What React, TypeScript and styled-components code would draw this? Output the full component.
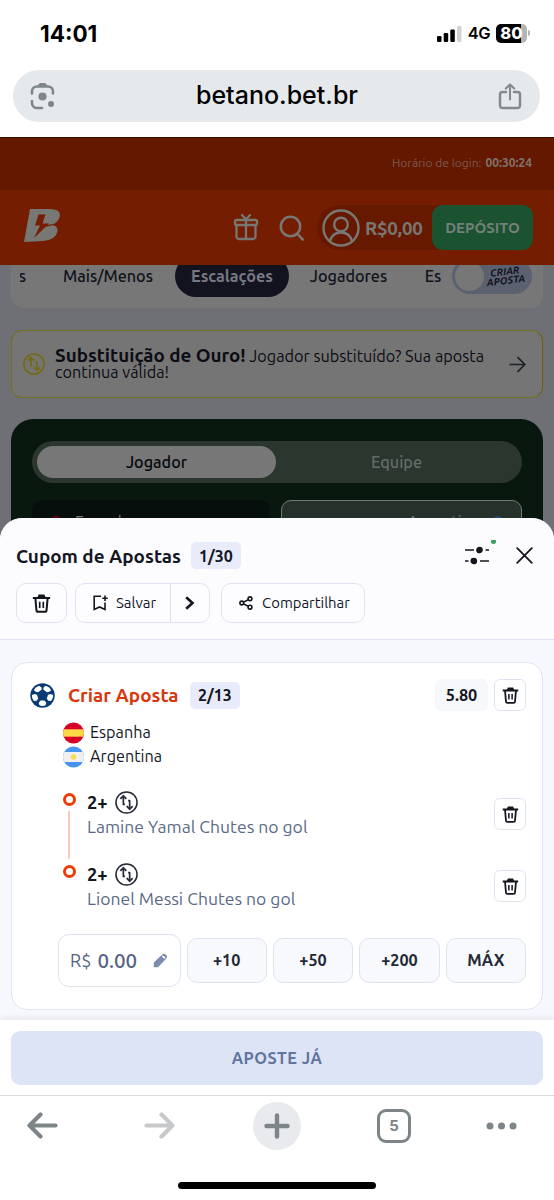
import React from "react";
import styled, { createGlobalStyle, css } from "styled-components";

const GlobalStyle = createGlobalStyle`
  * { box-sizing: border-box; }
  body { margin: 0; background: #fff; }
`;

const ui = `"Ubuntu", "Noto Sans", "Open Sans", sans-serif`;
const system = `"Inter", "Liberation Sans", sans-serif`;

const Screen = styled.div`
  width: 554px;
  height: 1200px;
  overflow: hidden;
  display: flex;
  flex-direction: column;
  background: #fff;
  font-family: ${ui};
  color: #14171f;
`;

const Text = styled.span<{ $size: number; $weight?: number; $color?: string; $track?: number }>`
  font-size: ${(p) => p.$size}px;
  font-weight: ${(p) => p.$weight ?? 400};
  color: ${(p) => p.$color ?? "inherit"};
  letter-spacing: ${(p) => p.$track ?? 0}px;
  white-space: nowrap;
`;

/* ---------- phone chrome ---------- */

const StatusBar = styled.div`
  height: 70px;
  padding: 4px 24px 8px 40px;
  display: flex;
  align-items: center;
  justify-content: space-between;
  font-family: ${system};
  color: #000;
  flex: none;
`;
const StatusIcons = styled.div`
  display: flex;
  align-items: center;
  gap: 6px;
`;
const Battery = styled.div`
  width: 31px;
  height: 19px;
  border-radius: 5px;
  background: linear-gradient(90deg, #000 25px, #b4b4b4 25px);
  color: #fff;
  display: flex;
  align-items: center;
  justify-content: center;
`;
const BatteryTip = styled.div`
  width: 2px;
  height: 6px;
  margin-left: -5px;
  border-radius: 0 2px 2px 0;
  background: #b4b4b4;
`;
const AddressBar = styled.div`
  flex: none;
  height: 52px;
  margin: 0 14px 15px 13px;
  padding: 0 18px 0 17px;
  border-radius: 26px;
  background: #e6e9ec;
  display: flex;
  align-items: center;
  justify-content: space-between;
  font-family: ${system};
  color: #000;
`;
const Address = styled.div`
  padding-bottom: 3px;
`;
const Toolbar = styled.div`
  flex: none;
  height: 60px;
  border-top: 1px solid #dcdddf;
  padding: 0 37px 0 27px;
  display: flex;
  align-items: center;
`;
const NewTab = styled.div`
  width: 48px;
  height: 48px;
  margin-left: 78px;
  border-radius: 50%;
  background: #e9eaee;
  display: flex;
  align-items: center;
  justify-content: center;
`;
const TabCount = styled.div`
  width: 34px;
  height: 34px;
  margin: 0 auto 0 76px;
  border: 3.5px solid #7d8588;
  border-radius: 9px;
  display: flex;
  align-items: center;
  justify-content: center;
  font-family: ${system};
`;
const ForwardSlot = styled.div`
  display: flex;
  margin-left: 86px;
`;
const HomeIndicator = styled.div`
  width: 198px;
  height: 7px;
  margin: 27px auto 0 178px;
  border-radius: 4px;
  background: #000;
`;

/* ---------- dimmed page ---------- */

const Page = styled.div`
  flex: none;
  height: 403px;
  overflow: hidden;
  background: #6f7075;
`;
const LoginStrip = styled.div`
  height: 53px;
  padding: 0 22px 3px;
  border-top: 1px solid #3c0f00;
  background: #641800;
  display: flex;
  align-items: center;
  justify-content: flex-end;
  gap: 4px;
`;
const SiteHeader = styled.div`
  height: 75px;
  padding: 0 21px 0 23px;
  background: #751d00;
  display: flex;
  align-items: center;
`;
const LogoSlot = styled.div`
  display: flex;
  padding-bottom: 5px;
`;
const HeaderActions = styled.div`
  margin-left: auto;
  display: flex;
  align-items: center;
  gap: 20px;
`;
const AccountPill = styled.div`
  width: 216px;
  height: 45px;
  margin-left: -8px;
  padding-left: 5px;
  border-radius: 23px 12px 12px 23px;
  background: #671900;
  display: flex;
  align-items: center;
`;
const Balance = styled.div`
  width: 72px;
  padding-left: 5px;
`;
const Deposit = styled.div`
  width: 101px;
  height: 45px;
  border-radius: 11px;
  background: #1b5230;
  display: flex;
  align-items: center;
  justify-content: center;
`;
const TabsCard = styled.div`
  height: 43px;
  margin: 0 11px;
  padding-left: 9px;
  border-radius: 0 0 13px 13px;
  background: #777778;
  overflow: hidden;
  display: flex;
  align-items: flex-start;
`;
const Tab = styled.div<{ $w: number; $active?: boolean; $indent?: number }>`
  flex: none;
  width: ${(p) => p.$w}px;
  height: 42px;
  margin-top: -10px;
  padding: 0 0 1px ${(p) => p.$indent ?? 0}px;
  display: flex;
  align-items: center;
  justify-content: center;
  ${(p) => p.$active && css`background: #12131f; border-radius: 21px;`}
`;
const ClippedTab = styled(Tab)`
  overflow: hidden;
  justify-content: flex-end;
`;
const BuildToggle = styled.div`
  flex: none;
  width: 80px;
  height: 36px;
  margin: -7px 0 0 -6px;
  padding: 0 7px 0 3px;
  border-radius: 18px;
  background: #5c6170;
  display: flex;
  align-items: center;
  justify-content: space-between;
`;
const Knob = styled.div`
  width: 29px;
  height: 29px;
  border-radius: 50%;
  background: #777778;
`;
const ToggleLabel = styled.div`
  transform: rotate(-7deg);
  text-align: center;
  font-size: 10px;
  line-height: 9px;
  font-weight: 700;
  font-style: italic;
  color: #10121c;
`;
const Promo = styled.div`
  height: 68px;
  margin: 22px 11px 0;
  padding: 0 16px 0 11px;
  border: 1.5px solid;
  border-color: #75701c #6a6200 #75701c #75701c;
  border-radius: 11px;
  background: #757576;
  display: flex;
  align-items: center;
`;
const PromoCopy = styled.div`
  flex: 1;
  padding: 0 0 1px 10px;
  line-height: 16px;
  color: #0c0d13;
`;
const Pitch = styled.div`
  height: 160px;
  margin: 21px 11px 0;
  padding: 22px 21px 0;
  border-radius: 22px;
  background: #09180f;
`;
const Segmented = styled.div`
  height: 42px;
  padding: 5px;
  border-radius: 21px;
  background: #2b362f;
  display: grid;
  grid-template-columns: 239px 1fr;
`;
const Segment = styled.div<{ $active?: boolean }>`
  border-radius: 16px;
  display: flex;
  align-items: center;
  justify-content: center;
  color: ${(p) => (p.$active ? "#06080c" : "#646c67")};
  background: ${(p) => (p.$active ? "#777778" : "transparent")};
`;
const Teams = styled.div`
  margin-top: 17px;
  display: grid;
  grid-template-columns: 238px 241px;
  gap: 11px;
`;
const Team = styled.div<{ $selected?: boolean }>`
  height: 43px;
  padding: 0 15px;
  border-radius: 10px;
  display: flex;
  align-items: center;
  gap: 11px;
  color: #777;
  background: ${(p) => (p.$selected ? "#26312b" : "#060f0c")};
  border: 1.5px solid ${(p) => (p.$selected ? "#717973" : "#060f0c")};
  justify-content: ${(p) => (p.$selected ? "flex-end" : "flex-start")};
`;
const TeamDot = styled.div<{ $c: string }>`
  width: 12px;
  height: 12px;
  margin: 0 2px;
  border-radius: 50%;
  background: ${(p) => p.$c};
`;

/* ---------- betslip sheet ---------- */

const Sheet = styled.div`
  flex: none;
  position: relative;
  height: 577px;
  margin-top: -22px;
  border-radius: 22px 22px 0 0;
  overflow: hidden;
  background: #f7f8fd;
  display: flex;
  flex-direction: column;
`;
const SheetHeader = styled.div`
  height: 122px;
  padding: 24px 16px 0;
  background: #fcfcff;
  border-bottom: 1px solid #dfe3f1;
`;
const TitleRow = styled.div`
  height: 27px;
  display: flex;
  align-items: center;
`;
const CountBadge = styled.div`
  width: 50px;
  height: 27px;
  border-radius: 5px;
  background: #e8ebf9;
  display: flex;
  align-items: center;
  justify-content: center;
`;
const SheetTitle = styled.div`
  width: 175px;
`;
const SheetControls = styled.div`
  margin-left: auto;
  display: flex;
  align-items: center;
  gap: 26px;
  padding-right: 5px;
`;
const SettingsButton = styled.div`
  position: relative;
  display: flex;
`;
const LiveDot = styled.div`
  position: absolute;
  right: -6px;
  top: -6px;
  width: 5px;
  height: 4px;
  border-radius: 1px 1px 3px 3px;
  background: #3d9f63;
`;
const ActionRow = styled.div`
  margin-top: 14px;
  display: flex;
`;
const Action = styled.div<{ $w: number; $gap?: number }>`
  width: ${(p) => p.$w}px;
  height: 40px;
  margin-left: ${(p) => p.$gap ?? 0}px;
  border: 1px solid #dfe3f1;
  border-radius: 10px;
  background: #fdfdff;
  display: flex;
  align-items: center;
  justify-content: center;
  gap: 8px;
`;
const SplitAction = styled(Action)`
  justify-content: flex-start;
  gap: 0;
`;
const SplitMain = styled.div`
  width: 95px;
  height: 100%;
  padding: 0 0 1px 3px;
  border-right: 1px solid #dfe3f1;
  display: flex;
  align-items: center;
  justify-content: center;
  gap: 8px;
`;
const ShareAction = styled(Action)`
  padding: 0 0 1px 3px;
  gap: 9px;
`;
const SplitMore = styled.div`
  flex: 1;
  display: flex;
  justify-content: center;
`;
const BetCard = styled.div`
  height: 348px;
  margin: 22px 11px 0;
  padding: 16px 16px 0 18px;
  border: 1px solid #e0e3f1;
  border-radius: 16px;
  background: #fff;
`;
const BetHeader = styled.div`
  height: 32px;
  display: flex;
  align-items: center;
`;
const BetTitle = styled.div`
  width: 122px;
  margin-left: 13px;
`;
const Odds = styled.div`
  width: 53px;
  height: 32px;
  margin: 0 6px 0 auto;
  padding-bottom: 1px;
  border-radius: 6px;
  background: #f7f8fc;
  display: flex;
  align-items: center;
  justify-content: center;
`;
const RemoveButton = styled.div`
  width: 32px;
  height: 32px;
  border: 1px solid #dfe3f1;
  border-radius: 6px;
  background: #fff;
  display: flex;
  align-items: center;
  justify-content: center;
`;
const TeamsList = styled.div`
  margin: 10px 0 0 33px;
`;
const TeamLine = styled.div`
  height: 24px;
  display: flex;
  align-items: center;
  gap: 6px;
`;
const TeamName = styled.div`
  padding-bottom: 2px;
`;
const Legs = styled.div`
  margin: 22px 0 0 32px;
`;
const Leg = styled.div`
  height: 72px;
  display: flex;
`;
const Track = styled.div`
  width: 14px;
  padding-top: 2px;
  display: flex;
  flex-direction: column;
  align-items: center;
`;
const Ring = styled.div`
  width: 13px;
  height: 13px;
  border: 3px solid #f03a0a;
  border-radius: 50%;
`;
const Connector = styled.div`
  width: 1.5px;
  height: 48px;
  margin-top: 5px;
  background: #f9c9bd;
`;
const LegBody = styled.div`
  flex: 1;
  margin-top: -1px;
  padding-left: 11px;
`;
const LegOutcome = styled.div`
  height: 24px;
  display: flex;
  align-items: center;
  gap: 7px;
`;
const LegMarket = styled.div`
  height: 25px;
  display: flex;
  align-items: center;
`;
const LegRemove = styled.div`
  padding-top: 7px;
`;
const StakeRow = styled.div`
  margin: -1px 0 0 28px;
  display: grid;
  grid-template-columns: 122.500px repeat(4, 1fr);
  gap: 6px;
  align-items: center;
`;
const StakeInput = styled.div`
  height: 53px;
  padding: 0 12px 1px 11px;
  border: 1px solid #dfe3f1;
  border-radius: 11px;
  display: flex;
  align-items: center;
  gap: 6px;
  color: #566484;
  svg { margin-left: auto; }
`;
const QuickStake = styled.div`
  height: 45px;
  padding-bottom: 1px;
  border: 1px solid #dfe3f1;
  border-radius: 10px;
  background: #f8f9fd;
  display: flex;
  align-items: center;
  justify-content: center;
`;
const SheetFooter = styled.div`
  height: 75px;
  margin-top: auto;
  padding: 11px;
  background: #fff;
  box-shadow: 0 -2px 6px rgba(20, 25, 50, 0.08);
`;
const PlaceBet = styled.div`
  height: 54px;
  padding-bottom: 1px;
  border-radius: 9px;
  background: #dce4f5;
  display: flex;
  align-items: center;
  justify-content: center;
`;

/* ---------- icons ---------- */

const Signal = () => (
  <svg width="25" height="17" viewBox="0 0 25 17">
    <rect x="0" y="11" width="4.5" height="6" rx="1.2" />
    <rect x="6.7" y="8" width="4.5" height="9" rx="1.2" />
    <rect x="13.3" y="4.5" width="4.5" height="12.5" rx="1.2" />
    <rect x="20" y="1" width="4.5" height="16" rx="1.2" fill="#d3d3d3" />
  </svg>
);
const Lens = () => (
  <svg width="26" height="28" viewBox="0 0 26 28" fill="none" stroke="#7e868a" strokeWidth="2.6" strokeLinecap="round">
    <path d="M2 11.500V9.5a5 5 0 0 1 5-5h11a5 5 0 0 1 5 5V11.500" />
    <path d="M2 19v2a5 5 0 0 0 5 5h5" />
    <path d="M7 4.500L9 1.800Q9.600 1 10.500 1H14.500Q15.400 1 16 1.800L18 4.500z" fill="#7e868a" stroke="none" />
    <circle cx="12.5" cy="14.5" r="4.1" fill="#7e868a" stroke="none" />
    <circle cx="21" cy="22" r="3" fill="#7e868a" stroke="none" />
  </svg>
);
const Share = () => (
  <svg width="24" height="28" viewBox="0 0 24 28" fill="none" stroke="#85898d" strokeWidth="2.5" strokeLinecap="round" strokeLinejoin="round">
    <path d="M8 10H4.5A2.5 2.5 0 0 0 2 12.500V23.500A2.500 2.500 0 0 0 4.500 26h15a2.500 2.500 0 0 0 2.500-2.500V12.500A2.500 2.500 0 0 0 19.500 10H16" />
    <path d="M12 17.500V3M7.800 6.600L12 2.400l4.200 4.200" strokeWidth="2.100" />
  </svg>
);
const Logo = () => (
  <svg width="38" height="34" viewBox="0 0 38 34">
    <path fill="#777774" fillRule="evenodd" d="M7 1H27Q37 1 37 7Q36 14 29 17Q35 18 34.500 23Q33 32 20 33L1 34ZM15.500 6.500L12 17.500H17L11 30L26 15.500H19.500L22.500 6.500Z" />
    <path fill="#751d00" d="M22 17.500L31 15.800L29 17.300L22 19Z" />
  </svg>
);
const Gift = () => (
  <svg width="26" height="29" viewBox="0 0 26 29" fill="none" stroke="#777774" strokeWidth="2.300" strokeLinecap="round" strokeLinejoin="round">
    <rect x="2" y="7" width="22" height="5" rx="1.500" />
    <path d="M3.500 12V23.500A2.500 2.500 0 0 0 6 26H20A2.500 2.500 0 0 0 22.500 23.500V12M13 7V26M13 6.500L9 2M13 6.500L17 2" />
  </svg>
);
const Search = () => (
  <svg width="26" height="27" viewBox="0 0 26 27" fill="none" stroke="#777774" strokeWidth="2.500" strokeLinecap="round">
    <circle cx="11.500" cy="12.500" r="9.700" />
    <path d="M18.500 20L23.800 25.600" />
  </svg>
);
const Avatar = () => (
  <svg width="38" height="38" viewBox="0 0 38 38" fill="none" stroke="#777774" strokeWidth="2.400" strokeLinecap="round">
    <circle cx="19" cy="19" r="17.500" />
    <circle cx="19" cy="15.500" r="6.800" />
    <path d="M8 32Q10.500 23.500 19 23.500T30 32" />
  </svg>
);
const Swap = ({ size, color, width }: { size: number; color: string; width: number }) => (
  <svg width={size} height={size} viewBox="0 0 24 24" fill="none" stroke={color} strokeWidth={width} strokeLinejoin="round">
    <circle cx="12" cy="12" r="11" />
    <path d="M10.300 14H8.700V5.500M13.700 10h1.600V18.500" strokeWidth={width * 1.100} />
    <path d="M5.600 8.200L8.700 5L11.800 8.200M12.200 15.800L15.300 19L18.400 15.800" strokeWidth={width * 1.150} />
  </svg>
);
const ArrowRight = () => (
  <svg width="17" height="17" viewBox="0 0 17 17" fill="none" stroke="#1f222a" strokeWidth="1.700">
    <path d="M0.500 8.500H15.500M8.500 1.200L15.800 8.500L8.500 15.800" />
  </svg>
);
const Trash = ({ size = 19 }: { size?: number }) => (
  <svg width={size} height={size} viewBox="0 0 18 18" fill="none" stroke="#14161e" strokeWidth="1.900" strokeLinejoin="round">
    <path d="M0.800 3.700H17.200M3.200 4L4.200 15.300Q4.300 16.900 5.700 16.900H12.300Q13.700 16.900 13.800 15.300L14.800 4" />
    <path d="M7.300 7.300V13.300M10.700 7.300V13.300" strokeWidth="1.600" />
    <path d="M6.200 0.500H11.800L13 3.500H5Z" fill="#14161e" stroke="none" />
  </svg>
);
const BookmarkPlus = () => (
  <svg width="15" height="16" viewBox="0 0 15 16" fill="none" stroke="#14161e" strokeWidth="1.600">
    <path d="M8 1.200H1.200V14.500L6.500 12L12 14.500V7.500M12 0.500V6M9.300 3.200H14.700" />
  </svg>
);
const ChevronRight = () => (
  <svg width="10" height="14" viewBox="0 0 10 14" fill="none" stroke="#14161e" strokeWidth="2.600">
    <path d="M1.200 1.200L7.500 7L1.200 12.800" />
  </svg>
);
const ShareNodes = () => (
  <svg width="14" height="14" viewBox="0 0 14 14" fill="none" stroke="#14161e" strokeWidth="1.600">
    <circle cx="2.800" cy="7" r="1.900" />
    <circle cx="11" cy="2.800" r="1.900" />
    <circle cx="11" cy="11.200" r="1.900" />
    <path d="M4.500 6.100L9.200 3.700M4.500 7.900L9.200 10.300" />
  </svg>
);
const Sliders = () => (
  <svg width="26" height="19" viewBox="0 0 26 19" stroke="#14161e" strokeWidth="1.700" fill="#14161e">
    <path d="M1 4H10M21.500 4H25M1 15H4.500M16 15H25" />
    <circle cx="15.500" cy="4" r="2.500" />
    <circle cx="9.800" cy="15" r="2.500" />
  </svg>
);
const Close = () => (
  <svg width="17" height="17" viewBox="0 0 17 17" stroke="#14161e" strokeWidth="1.800" strokeLinecap="round">
    <path d="M1.200 1.200L15.800 15.800M15.800 1.200L1.200 15.800" />
  </svg>
);
const Ball = () => (
  <svg width="25" height="25" viewBox="0 0 26 26">
    <circle cx="13" cy="13" r="12.700" fill="#0b3b75" />
    <g fill="#fff">
      <path d="M4 7.500L6 4.600L9.500 2.900L12 4.700V7L8.300 9.600L6 9Z" />
      <path d="M22 7.500L20 4.600L16.500 2.900L14 4.700V7L17.700 9.600L20 9Z" />
      <path d="M2 12.500L5 11.500L7.300 12.200L8.500 16.200L7 18.500L4 18.600L2.300 15.500Z" />
      <path d="M24 12.500L21 11.500L18.700 12.200L17.500 16.200L19 18.500L22 18.600L23.700 15.500Z" />
      <path d="M11 18.300H15L17 20.500L16 23.300L13 24L10 23.300L9 20.500Z" />
    </g>
  </svg>
);
const SpainFlag = () => (
  <svg width="21" height="22" viewBox="0 0 21 22">
    <clipPath id="es"><circle cx="10.500" cy="11" r="10.500" /></clipPath>
    <g clipPath="url(#es)">
      <rect width="21" height="22" fill="#d80027" />
      <rect y="7.300" width="21" height="7.400" fill="#fcd846" />
    </g>
  </svg>
);
const ArgentinaFlag = () => (
  <svg width="21" height="22" viewBox="0 0 21 22">
    <clipPath id="ar"><circle cx="10.500" cy="11" r="10.500" /></clipPath>
    <g clipPath="url(#ar)">
      <rect width="21" height="22" fill="#4793ef" />
      <rect y="6" width="21" height="10" fill="#f0f0f0" />
      <circle cx="10.500" cy="11" r="2.700" fill="#f6dc54" />
    </g>
  </svg>
);
const Pencil = () => (
  <svg width="15" height="15" viewBox="0 0 15 15">
    <path d="M0.800 14.200V9.500L9.300 1.500Q11 0 12.700 1.600L13.300 2.200Q14.700 3.900 13.300 5.500L5 14.200Z" fill="#7b8bad" />
    <path d="M9.800 3.300L11.600 4.900" stroke="#fff" strokeWidth="1.600" strokeLinecap="round" />
  </svg>
);
const NavArrow = ({ color, flip }: { color: string; flip?: boolean }) => (
  <svg width="31" height="27" viewBox="0 0 31 27" fill="none" stroke={color} strokeWidth="4.200" strokeLinecap="round" strokeLinejoin="round">
    <path d={flip ? "M2.500 13.500H28M17.500 2.500L28.500 13.500L17.500 24.500" : "M28.500 13.500H3M13.500 2.500L2.500 13.500L13.500 24.500"} />
  </svg>
);
const Plus = () => (
  <svg width="26" height="26" viewBox="0 0 26 26" stroke="#7d8588" strokeWidth="4.400" strokeLinecap="round">
    <path d="M13 2.500V23.500M2.500 13H23.500" />
  </svg>
);
const More = () => (
  <svg width="31" height="8" viewBox="0 0 31 8" fill="#7d8588">
    <circle cx="4" cy="4" r="3.500" />
    <circle cx="15.500" cy="4" r="3.500" />
    <circle cx="27" cy="4" r="3.500" />
  </svg>
);

const legs = ["Lamine Yamal Chutes no gol", "Lionel Messi Chutes no gol"];
const quickStakes = ["+10", "+50", "+200", "MÁX"];

export default function App() {
  return (
    <Screen>
      <GlobalStyle />
      <StatusBar>
        <Text $size={22.5} $weight={700}>14:01</Text>
        <StatusIcons>
          <Signal />
          <Text $size={16.5} $weight={600} $track={-0.5}>4G</Text>
          <Battery><Text $size={16.5} $weight={800}>80</Text></Battery>
          <BatteryTip />
        </StatusIcons>
      </StatusBar>
      <AddressBar>
        <Lens />
        <Address><Text $size={25} $weight={500}>betano.bet.br</Text></Address>
        <Share />
      </AddressBar>

      <Page>
        <LoginStrip>
          <Text $size={12} $color="#7a5a50">Horário de login:</Text>
          <Text $size={12} $weight={700} $color="#80736c">00:30:24</Text>
        </LoginStrip>
        <SiteHeader>
          <LogoSlot><Logo /></LogoSlot>
          <HeaderActions>
            <Gift />
            <Search />
            <AccountPill>
              <Avatar />
              <Balance><Text $size={18.8} $weight={700} $color="#777774" $track={-0.3}>R$0,00</Text></Balance>
              <Deposit><Text $size={15} $weight={600} $color="#74807a">DEPÓSITO</Text></Deposit>
            </AccountPill>
          </HeaderActions>
        </SiteHeader>
        <TabsCard>
          <ClippedTab $w={6}><Text $size={16.2} $weight={500} $color="#10121a">s</Text></ClippedTab>
          <Tab $w={149} $indent={15}><Text $size={16.2} $weight={500} $color="#10121a">Mais/Menos</Text></Tab>
          <Tab $w={114} $active><Text $size={16.2} $weight={700} $color="#777882">Escalações</Text></Tab>
          <Tab $w={119}><Text $size={16.2} $weight={500} $color="#10121a">Jogadores</Text></Tab>
          <Tab $w={50}><Text $size={16.2} $weight={500} $color="#10121a">Es</Text></Tab>
          <BuildToggle>
            <Knob />
            <ToggleLabel>CRIAR<br />APOSTA</ToggleLabel>
          </BuildToggle>
        </TabsCard>
        <Promo>
          <Swap size={22} color="#746b10" width={1.7} />
          <PromoCopy>
            <Text $size={18.8} $weight={700}>Substituição de Ouro!</Text>{" "}
            <Text $size={16.25}>Jogador substituído? Sua aposta</Text>
            <br />
            <Text $size={16.25}>continua válida!</Text>
          </PromoCopy>
          <ArrowRight />
        </Promo>
        <Pitch>
          <Segmented>
            <Segment $active><Text $size={16.2} $weight={500}>Jogador</Text></Segment>
            <Segment><Text $size={16.2} $weight={500}>Equipe</Text></Segment>
          </Segmented>
          <Teams>
            <Team>
              <TeamDot $c="#6c0013" />
              <Text $size={16}>Espanha</Text>
            </Team>
            <Team $selected>
              <Text $size={16}>Argentina</Text>
              <TeamDot $c="#234977" />
            </Team>
          </Teams>
        </Pitch>
      </Page>

      <Sheet>
        <SheetHeader>
          <TitleRow>
            <SheetTitle><Text $size={18.9} $weight={700}>Cupom de Apostas</Text></SheetTitle>
            <CountBadge><Text $size={16} $weight={700}>1/30</Text></CountBadge>
            <SheetControls>
              <SettingsButton><Sliders /><LiveDot /></SettingsButton>
              <Close />
            </SheetControls>
          </TitleRow>
          <ActionRow>
            <Action $w={51}><Trash /></Action>
            <SplitAction $w={135} $gap={8}>
              <SplitMain><BookmarkPlus /><Text $size={15}>Salvar</Text></SplitMain>
              <SplitMore><ChevronRight /></SplitMore>
            </SplitAction>
            <ShareAction $w={144} $gap={11}><ShareNodes /><Text $size={14.9}>Compartilhar</Text></ShareAction>
          </ActionRow>
        </SheetHeader>

        <BetCard>
          <BetHeader>
            <Ball />
            <BetTitle><Text $size={18.9} $weight={700} $color="#d8370c">Criar Aposta</Text></BetTitle>
            <CountBadge><Text $size={16} $weight={700}>2/13</Text></CountBadge>
            <Odds><Text $size={16.3} $weight={700}>5.80</Text></Odds>
            <RemoveButton><Trash size={17} /></RemoveButton>
          </BetHeader>
          <TeamsList>
            <TeamLine><SpainFlag /><TeamName><Text $size={16.2}>Espanha</Text></TeamName></TeamLine>
            <TeamLine><ArgentinaFlag /><TeamName><Text $size={16.2}>Argentina</Text></TeamName></TeamLine>
          </TeamsList>
          <Legs>
            {legs.map((leg, i) => (
              <Leg key={leg}>
                <Track>
                  <Ring />
                  {i < legs.length - 1 && <Connector />}
                </Track>
                <LegBody>
                  <LegOutcome><Text $size={18.3} $weight={700}>2+</Text><Swap size={23} color="#252a36" width={1.6} /></LegOutcome>
                  <LegMarket><Text $size={17.55} $color="#5b6987">{leg}</Text></LegMarket>
                </LegBody>
                <LegRemove><RemoveButton><Trash size={17} /></RemoveButton></LegRemove>
              </Leg>
            ))}
          </Legs>
          <StakeRow>
            <StakeInput>
              <Text $size={18}>R$</Text>
              <Text $size={20.5} $weight={500}>0.00</Text>
              <Pencil />
            </StakeInput>
            {quickStakes.map((q) => (
              <QuickStake key={q}><Text $size={16.2} $weight={700} $color="#242936">{q}</Text></QuickStake>
            ))}
          </StakeRow>
        </BetCard>

        <SheetFooter>
          <PlaceBet><Text $size={16.2} $weight={700} $color="#6274a0" $track={0.5}>APOSTE JÁ</Text></PlaceBet>
        </SheetFooter>
      </Sheet>

      <Toolbar>
        <NavArrow color="#7d8588" />
        <ForwardSlot><NavArrow color="#c6c8ca" flip /></ForwardSlot>
        <NewTab><Plus /></NewTab>
        <TabCount><Text $size={15} $weight={700} $color="#7d8588">5</Text></TabCount>
        <More />
      </Toolbar>
      <HomeIndicator />
    </Screen>
  );
}
